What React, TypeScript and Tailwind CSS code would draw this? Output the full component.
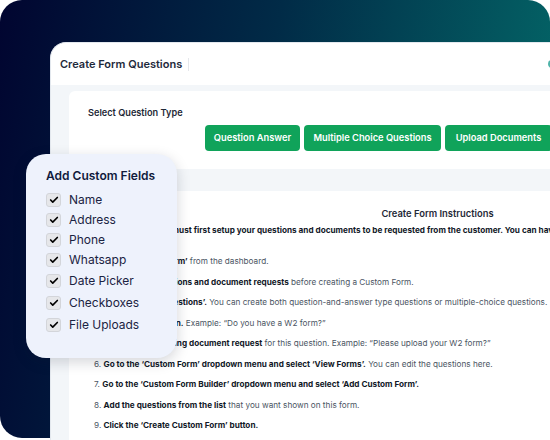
import { Check } from "lucide-react";

const fields = ["Name", "Address", "Phone", "Whatsapp", "Date Picker", "Checkboxes", "File Uploads"];

const questionTypes = [
  { label: "Question Answer", w: "w-[95px]" },
  { label: "Multiple Choice Questions", w: "w-[137px]" },
  { label: "Upload Documents", w: "w-[107px]" },
];

type Step = { bold: string; rest: string };

const steps: Step[] = [
  { bold: "Select ‘Custom Form’", rest: " from the dashboard." },
  { bold: "Create your questions and document requests", rest: " before creating a Custom Form." },
  { bold: "Select ‘Create Questions’.", rest: " You can create both question-and-answer type questions or multiple-choice questions." },
  { bold: "Type your question.", rest: " Example: “Do you have a W2 form?”" },
  { bold: "Add a corresponding document request", rest: " for this question. Example: “Please upload your W2 form?”" },
  { bold: "Go to the ‘Custom Form’ dropdown menu and select ‘View Forms’.", rest: " You can edit the questions here." },
  { bold: "Go to the ‘Custom Form Builder’ dropdown menu and select ‘Add Custom Form’.", rest: "" },
  { bold: "Add the questions from the list", rest: " that you want shown on this form." },
  { bold: "Click the ‘Create Custom Form’ button.", rest: "" },
];

function FieldsCard() {
  return (
    <div className="absolute left-[26px] top-[154px] w-[151px] h-[204px] rounded-[20px] bg-[#eef2fc] shadow-[0_4px_14px_rgba(15,23,42,0.18)] pl-[20px] pt-[14px]">
      <h3 className="text-[12px] font-semibold text-[#101a3c] leading-[16px]">Add Custom Fields</h3>
      <ul className="mt-[6px] flex flex-col">
        {fields.map((f, i) => (
          <li key={f} className={`flex items-center gap-[8px] ${i < 4 ? "h-[20px]" : "h-[22px]"}`}>
            <span className="w-[15px] h-[14px] rounded-[3px] bg-[#e6e7ea] border border-[#d3d5da] flex items-center justify-center">
              <Check size={10} strokeWidth={4} className="text-black" />
            </span>
            <span className="text-[12px] text-[#1b2342] leading-none">{f}</span>
          </li>
        ))}
      </ul>
    </div>
  );
}

export default function App() {
  return (
    <div className="relative w-[550px] h-[440px] overflow-hidden bg-white font-['Inter',sans-serif]">
      <div className="h-[438px] rounded-[22px] bg-[linear-gradient(100deg,#010530_0%,#012b47_45%,#046d6b_100%)] pt-[42px] pl-[50px]">
        <div className="w-[780px] h-[420px] rounded-tl-[16px] bg-white border-t border-l border-[#e3e8ee] overflow-hidden">
          <div className="h-[42px] flex items-center pl-[9px]">
            <span className="text-[11px] font-semibold text-[#1e293b]">Create Form Questions</span>
            <span className="ml-[6px] w-px h-[13px] bg-[#e5e7eb]" />
            <span className="ml-[359px] w-[5px] h-[8px] rounded-l-full bg-[#4fb3a9]" />
          </div>
          <div className="bg-[#f3f6f9] pl-[18px] pt-[6px] h-full">
            <div className="h-[78px] rounded-[6px] bg-white pl-[19px] pt-[16px]">
              <p className="text-[9.2px] font-semibold text-[#1f2937] leading-[12px]">Select Question Type</p>
              <div className="mt-[6px] ml-[117px] flex gap-[4px]">
                {questionTypes.map((q) => (
                  <button
                    key={q.label}
                    className={`${q.w} h-[26px] rounded-[4px] bg-[#10a35a] text-white text-[9.3px] font-semibold`}
                  >
                    {q.label}
                  </button>
                ))}
              </div>
            </div>
            <div className="mt-[22px] w-[718px] rounded-tl-[6px] bg-white pt-[17px] pl-[19px] h-full">
              <h4 className="text-center text-[9.4px] font-semibold text-[#1f2937] leading-[12px]">
                Create Form Instructions
              </h4>
              <p className="mt-[4px] text-[8.2px] font-bold text-[#111827] whitespace-nowrap">
                To create a form you must first setup your questions and documents to be requested from the customer. You can have unlimited questions.
              </p>
              <ol className="mt-[19px] pl-[6px] flex flex-col gap-[8px] text-[8.2px] leading-[12.5px] text-[#4b5563] whitespace-nowrap">
                {steps.map((s, i) => (
                  <li key={i}>
                    {i + 1}. <span className="font-bold text-[#111827]">{s.bold}</span>
                    {s.rest}
                  </li>
                ))}
              </ol>
            </div>
          </div>
        </div>
      </div>
      <FieldsCard />
    </div>
  );
}
